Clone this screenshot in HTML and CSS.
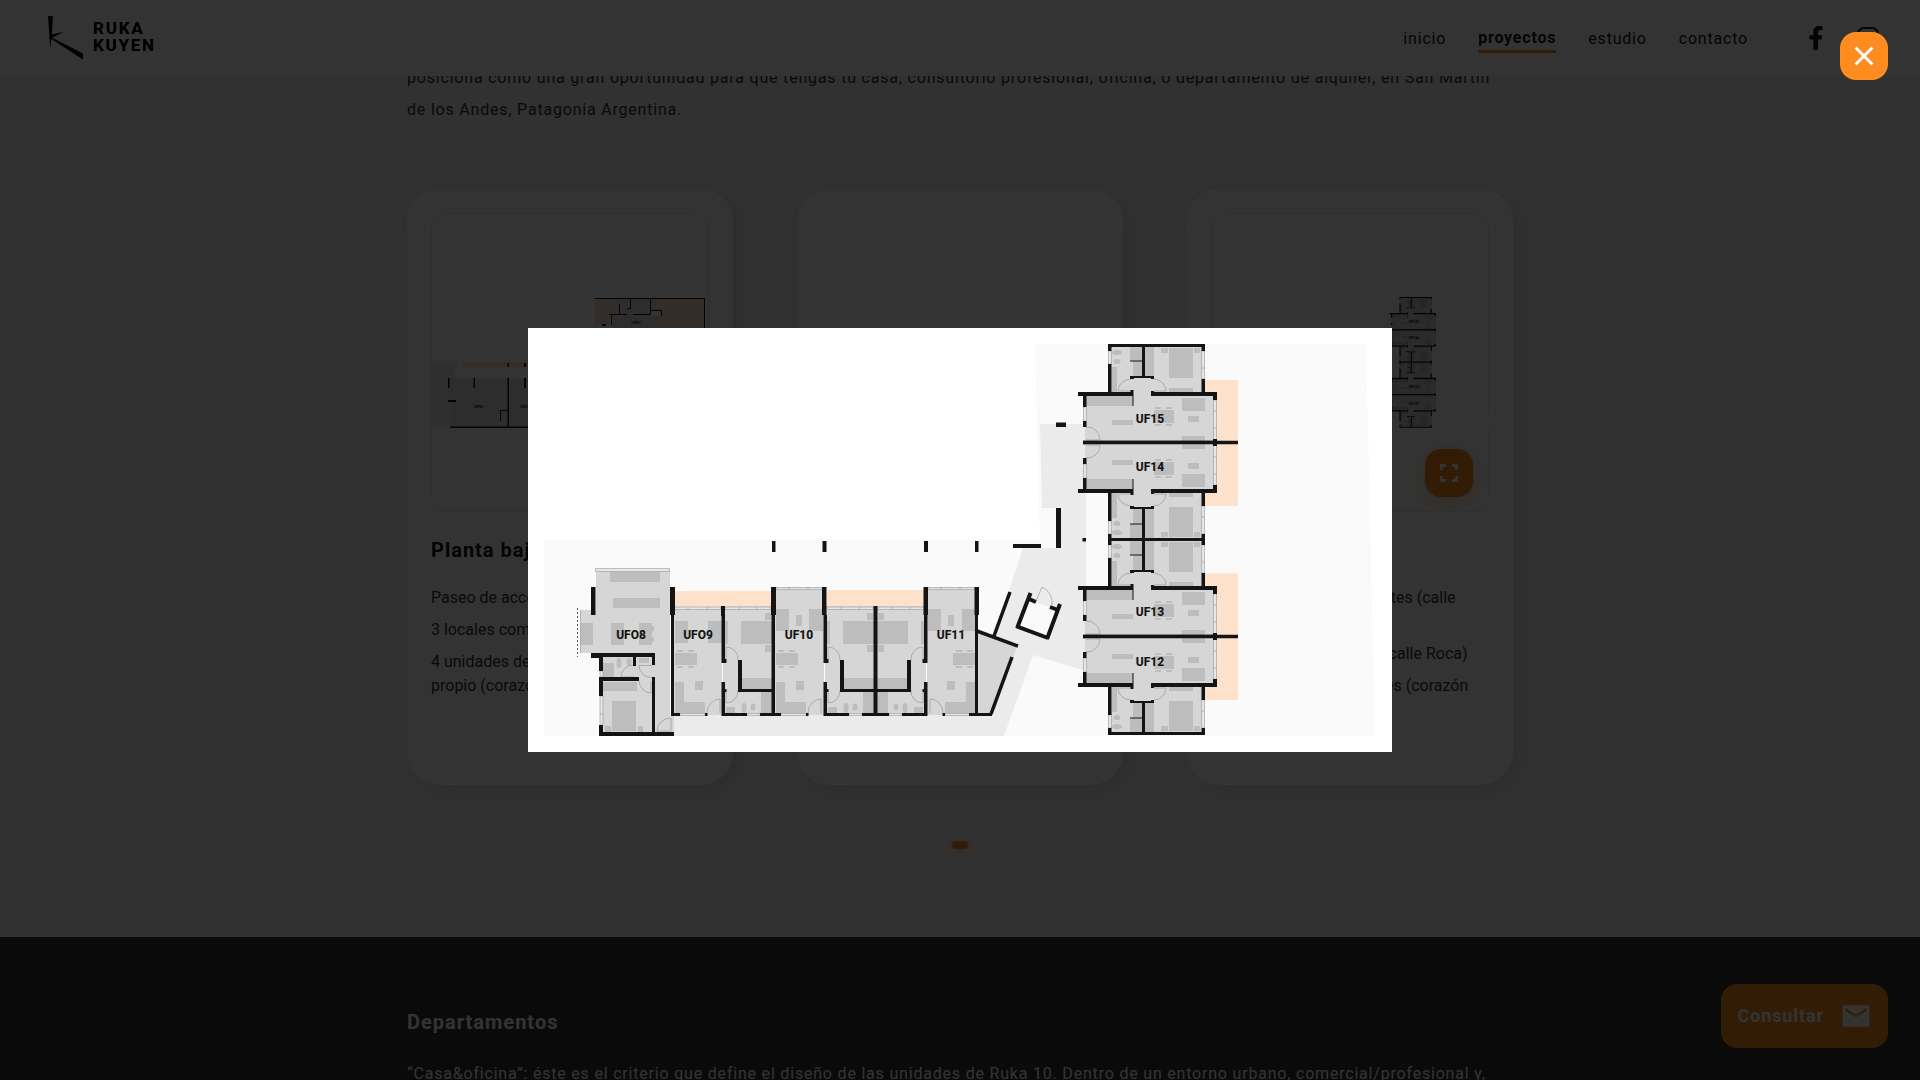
FILE: index.html
```html
<!DOCTYPE html>
<html lang="es">
<head>
<meta charset="utf-8">
<meta name="viewport" content="width=device-width, initial-scale=1">
<title>Ruka Kuyen - Proyectos</title>
<link rel="stylesheet" href="styles.css">
</head>
<body>
<header class="header">
  <a class="brand" href="#">
    <svg class="brand-mark" viewBox="0 0 36 44" aria-hidden="true"><path d="M0 0H5L3.800 18.500 15.500 16 4 21.800 35 37.500V43.500L3.500 23 2.200 32Z"/></svg>
    <span class="brand-name">RUKA<br>KUYEN</span>
  </a>
  <nav class="nav">
    <a href="#">inicio</a>
    <a class="is-active" href="#">proyectos</a>
    <a href="#">estudio</a>
    <a href="#">contacto</a>
  </nav>
  <div class="social">
    <a href="#" aria-label="Facebook"><svg viewBox="0 0 320 512"><path d="M279 288l14-93h-89v-60c0-25 13-50 53-50h40V7S260 0 225 0c-73 0-121 44-121 125v70H23v93h81v224h100V288z"/></svg></a>
    <a href="#" aria-label="Instagram"><svg viewBox="0 0 24 24" fill="none" stroke="currentColor" stroke-width="2"><rect x="2" y="2" width="20" height="20" rx="6"/><circle cx="12" cy="12" r="5"/></svg></a>
  </div>
</header>

<main>
  <section class="plans">
    <p class="lead">posiciona como una gran oportunidad para que tengas tu casa, consultorio profesional, oficina, o departamento de alquiler, en San Martín de los Andes, Patagonia Argentina.</p>
    <div class="cards">
      <article class="card">
        <div class="thumb">
          <svg viewBox="431 297 278 131" role="img" aria-label="Planta baja">
            <path fill="#ebebeb" d="M431 363h24v64h-24z"/>
            <path fill="#e2e2e2" d="M448 379h87v48h-84v-26h-3zM611 315h49v50h-49zM619 299h32v16h-32z"/>
            <path fill="#fde1cb" d="M463 362h65v5h-65zM595 299h24v15h-9v11h-15zM651 299h53v70h-44v-59h-9z"/>
            <path fill="#141414" d="M595 298h110v70h-1V299H595zM507.500 363h1.500v4h-1.500zM524 363h2v4h-2zM448 378h1.500v10H448zM473.500 378h1.500v10h-1.500zM507.500 378h1.500v50h-1.500zM524 378h2v10h-2zM448 400h8v2h-8zM450 426.500h85v1.500h-85zM500 410h8v1h-7v10h-1zM619 304h1v10h7v1h-18v-1h10zM630 299h1v10h-4v-1h3zM633 314h17v-15h1v11h11v6h-1v-5h-10v4h-18zM611 315h1v10h-1zM602 324h4v2h-4z"/>
            <g class="thumb-label"><text x="479" y="408">UF01</text><text x="525" y="408">UF02</text><text x="636" y="324">UF07</text></g>
          </svg>
        </div>
        <h3>Planta baja</h3>
        <ul><li>Paseo de acceso libre</li><li>3 locales comerciales</li><li>4 unidades de vivienda con patio propio (corazón de manzana)</li></ul>
      </article>
      <article class="card">
        <div class="thumb is-empty"></div>
        <h3>Primer piso</h3>
        <ul><li>Circulación semicubierta</li><li>4 unidades funcionales</li><li>Balcones propios</li></ul>
      </article>
      <article class="card">
        <div class="thumb">
          <svg viewBox="544 344 832 392" role="img" aria-label="Segundo piso"><path fill="#fcfcfc" d="M1035 344h331l9 392H1035z"/><use href="#wing"/></svg>
          <button class="expand" type="button" aria-label="Ampliar"><svg viewBox="0 0 18 18" fill="none" stroke="currentColor" stroke-width="3"><path d="M1.500 6V1.500H6M12 1.500h4.500V6M16.500 12v4.500H12M6 16.500H1.500V12"/></svg></button>
        </div>
        <h3>Segundo piso</h3>
        <ul><li>12 unidades con dos frentes (calle Roca y patio)</li><li>Acceso desde el núcleo (calle Roca)</li><li>4 unidades independientes (corazón de manzana)</li></ul>
      </article>
    </div>
    <div class="dots"><button type="button" aria-label="Página 1"></button></div>
  </section>

  <section class="details">
    <h3>Departamentos</h3>
    <p>“Casa&amp;oficina”: éste es el criterio que define el diseño de las unidades de Ruka 10. Dentro de un entorno urbano, comercial/profesional y,</p>
  </section>
</main>

<a class="contact" href="#">Consultar
  <svg viewBox="0 0 24 24" aria-hidden="true"><path d="M20 4H4c-1.100 0-2 .900-2 2v12c0 1.100.900 2 2 2h16c1.100 0 2-.900 2-2V6c0-1.100-.900-2-2-2zm0 4l-8 5-8-5V6l8 5 8-5z"/></svg>
</a>

<div class="overlay" role="dialog" aria-modal="true" aria-label="Plano ampliado">
  <button class="close" type="button" aria-label="Cerrar"><svg viewBox="0 0 20 20" stroke="currentColor" stroke-width="3"><path d="M1.500 1.500l17 17M18.500 1.500l-17 17"/></svg></button>
  <figure class="viewer">
    <svg viewBox="544 344 832 392" role="img" aria-label="Planta de unidades UF08 a UF15">
      <defs>
        <!-- One apartment of the east wing; the others are mirrored or shifted copies -->
        <g id="apartment">
          <path fill="#d6d6d6" d="M1109 345h95v49h12v49H1085v-49h24z"/>
          <path fill="#bdbdbd" d="M1086 396h47v10h-47zM1112 420h21v5h-21zM1182 398h23v13h-23zM1188 416h11v6h-11zM1182 436h23v6h-23zM1154 410h20v13h-20zM1155 407h6v2h-6zM1166 407h6v2h-6zM1155 424h6v2h-6zM1166 424h6v2h-6zM1169 348h24v30h-24zM1145 347h9v29h-9zM1161 348h7v5h-7zM1194 348h6v5h-6zM1169 388h24v5h-24zM1112 367h5v25h-5zM1130 347h12v14h-12zM1133 361h9v15h-9z"/>
          <ellipse cx="1117" cy="352.500" rx="5" ry="2.500" fill="#bdbdbd"/><ellipse cx="1117" cy="361.500" rx="3.500" ry="2.500" fill="#bdbdbd"/>
          <path class="glass" d="M1108.500 351h3v13h-3zM1201.500 351h3v28h-3zM1201.500 368h3M1083.500 407h3v14h-3zM1213.500 400h3v40h-3zM1213.500 411h3M1213.500 428h3"/>
          <path class="door" d="M1131 391h-13a13 12 0 0 1 13-12M1154 379a13 12 0 0 1 12 12h-12M1086 427a13 13 0 0 1 14 13h-14"/>
          <path fill="#141414" d="M1108 344h97v7h-3.500v-4h-56.500v29h9v3h-3v-1h-17v1h-4v-3h12v-29h-30.500v4h-3.500zM1130 360.500h12v1h-12zM1108 364h3.500v28h19v-2h3v16h-1v-10h-46v11h-3.500v-11h-5v-4h30zM1151 391h3v1h47.500v-13h3.500v13h12v8h-4v-4h-62zM1083 421h3.500v6H1083zM1083 440.700h134v3.600h-134zM1213 439h4v5h-4z"/>
        </g>
        <g id="wing">
          <use href="#apartment"/>
          <use href="#apartment" transform="matrix(1 0 0 -1 0 885)"/>
          <use href="#apartment" transform="translate(0 194)"/>
          <use href="#apartment" transform="matrix(1 0 0 -1 0 1079)"/>
          <g class="label"><text x="1150" y="423">UF15</text><text x="1150" y="471">UF14</text><text x="1150" y="616">UF13</text><text x="1150" y="666">UF12</text></g>
        </g>
        <g id="bedroom">
          <path fill="#d6d6d6" d="M723 606h50v109h-50z"/>
          <path fill="#bdbdbd" d="M741 621h31v23h-31zM765 613h6v7h-6zM765 645h6v7h-6zM725 621h3v23h-3zM742 678h31v11h-31zM761 692h12v21h-12zM726 707h9v6h-9z"/>
          <ellipse cx="744" cy="708" rx="2.500" ry="5" fill="#bdbdbd"/><ellipse cx="753" cy="707" rx="2.500" ry="3.500" fill="#bdbdbd"/>
          <path class="glass" d="M725 607h46v2.500h-46zM739 607v2.500M757 607v2.500M747 713.500h13v2h-13z"/>
          <path class="door" d="M726 660v-13a12 12 0 0 1 12 13M726 690v13a12 12 0 0 0 12-13"/>
          <path fill="#141414" d="M721.500 615h3.500v44h1.500v4h-5zM738 660h4v29h31v3h-35zM721.500 682h3.500v7h1.500v3h-1.500v21h22v3h-25.500zM760 713h15v3h-15z"/>
        </g>
        <g id="living">
          <path fill="#bdbdbd" d="M675 653h22v12h-22zM677 650h6v2h-6zM688 650h6v2h-6zM677 666h6v2h-6zM688 666h6v2h-6zM695 681h8v9h-8zM675 682h9v20h21v11h-30z"/>
          <path class="glass" d="M680 713.500h25v2h-25z"/>
          <path class="door" d="M720 713v-14a13 14 0 0 0-13 14"/>
          <path fill="#141414" d="M672.500 713h7.500v3h-7.500zM705 713h2.500v3h-2.500z"/>
        </g>
      </defs>

      <path fill="#fafafa" d="M544 540h496l-5-196h331l9 392H544z"/>
      <path fill="#ebebeb" d="M1040 424h46v247l-53-16-29 81H674v-21h318l25-70-23-9 29-88h33v-40h-14z"/>
      <path fill="#fde1cb" d="M674 591h98v16h-98zM827 590h97v17h-97zM1204 380h34v126h-34zM1204 573.500h34V700h-34z"/>
      <use href="#wing"/>

      <path fill="#d6d6d6" d="M596 570h74v146h4v18h-73v-80h-5v-1h-16v-43h16zM673 608h49v107h-49zM775 587h49v128h-49zM927 587h49v128h-49zM978 632l39 14-24 69h-15z"/>
      <path fill="#bdbdbd" d="M610 572h50v10h-50zM613 598h47v10h-47zM581 623h12v22h-12zM611 623h13v22h-13zM639 623h13v22h-13zM652 626h2v5h-2zM652 637h2v5h-2zM603 663h11v15h-11zM603 682h34v9h-34zM612 701h24v30h-24zM605 726h6v6h-6zM638 726h5v6h-5zM639 658h10v5h-10zM675 621h13v22h-13zM708 621h14v22h-14zM776 609h13v22h-13zM809 609h14v22h-14zM796 615h6v11h-6zM928 609h13v22h-13zM962 609h13v22h-13zM948 615h6v11h-6z"/>
      <ellipse cx="619" cy="663" rx="2.500" ry="5" fill="#bdbdbd"/><ellipse cx="629" cy="662" rx="2.500" ry="4" fill="#bdbdbd"/>
      <path class="glass" d="M595.500 568.500h74v3h-74zM580.500 610v43M600 696h3v29h-3zM600 714h3M600 671h3v6h-3zM675 607h46v2.500h-46zM688 607v2.500M707 607v2.500M776 587.500h47v2h-47zM789 587.500v2M808 587.500v2M928 587.500h47v2h-47zM941 587.500v2M960 587.500v2"/>
      <path fill="none" stroke="#555" stroke-dasharray="2 2" d="M577.500 608v49"/>
      <path class="door" d="M634 677h-13a13 12 0 0 1 13-12M652 665.500h-13a12 12 0 0 0 13 12M651 681v12a12 13 0 0 1-12-12M657 731h14v-13a14 13 0 0 0-14 13"/>
      <use href="#living"/><use href="#living" transform="translate(101 0)"/><use href="#living" transform="matrix(-1 0 0 1 1650 0)"/>
      <use href="#bedroom"/><use href="#bedroom" transform="translate(102 0)"/><use href="#bedroom" transform="matrix(-1 0 0 1 1649 0)"/>
      <path fill="#141414" d="M1217 440.700h21v3.600h-21zM1217 634.700h21v3.600h-21zM772 541h3.500v11H772zM822.500 541h4v11h-4zM924 541h4v11h-4zM975 541h3.500v11H975zM591 587h4.500v28H591zM670 587h5v28h-1v101h-3V615h-1zM591 653h64v12h-3v-8h-16v9h-3v-9h-30v14h-4v-13h-8zM599 677h40v4h-36v15h-4zM652 677h3v55h19v4h-75v-11h4v7h49zM721 606h4v10h-4zM771 587h5v28h-1v101h-3.500V615h-.5zM822 587h4.500v28H822zM873.500 606h4v110h-4zM923.500 587h4.500v28h-4.500zM974.500 587h4.500v28h-1v98h14v3h-23v-3h6v-98h-.5zM1013 544h28v4h-28zM1056 508h5v40h-5zM1056 422.500h10v4.500h-10zM1082.500 538h3.500v3.500h-3.500z"/>
      <path fill="#fafafa" d="M1030 600l27 10-11 26-27-10z"/>
      <g fill="none" stroke="#141414" stroke-width="3.500"><path d="M977 631l41 15M1012 657l-21 57M1010 592l-16 44"/><path stroke-width="4" d="M1030.500 593l-13 34M1016 626l32 12M1047 639l13-35M1029 599l7 3M1050 607l8 3"/></g>
      <path class="door" d="M1036 601l6-14a17 17 0 0 1 10 18"/>
      <g class="label"><text x="631" y="639">UFO8</text><text x="698" y="639">UFO9</text><text x="799" y="639">UF10</text><text x="951" y="639">UF11</text></g>
    </svg>
  </figure>
</div>
</body>
</html>
```
FILE: styles.css
```css
:root {
  --orange: #ff8c1e;
  --ink: #141414;
}

* { box-sizing: border-box; }

html, body { height: 100%; }

body {
  margin: 0;
  overflow: hidden;
  background: #f5f5f5;
  color: #333;
  font: 16px/24px Roboto, sans-serif;
}

a { color: inherit; text-decoration: none; }
button { border: 0; padding: 0; cursor: pointer; }
svg { display: block; }
h3, p, ul, figure { margin: 0; padding: 0; }

.header {
  position: fixed;
  inset: 0 0 auto;
  z-index: 1;
  display: flex;
  align-items: center;
  height: 76px;
  padding: 0 40px 0 48px;
  background: #fff;
  color: var(--ink);
}

.brand {
  display: flex;
  align-items: center;
  gap: 9px;
  margin-right: auto;
  color: #000;
}
.brand-mark { width: 36px; height: 44px; }
.brand-name {
  padding-bottom: 3px;
  font-size: 17px;
  font-weight: 800;
  line-height: 17px;
  letter-spacing: 0.1em;
}

.nav {
  display: flex;
  align-items: center;
  gap: 32px;
  padding-top: 2px;
  letter-spacing: 0.05em;
}
.nav .is-active { border-bottom: 3px solid var(--orange); font-weight: 700; }

.social { display: flex; gap: 28px; margin-left: 56px; }
.social svg { width: 24px; height: 24px; fill: currentColor; }
.social a:last-child svg { fill: none; }

.plans, .details { padding-inline: max(24px, calc((100% - 1106px) / 2)); }

.plans { padding-top: 62px; padding-bottom: 88px; }
.lead, .details p { line-height: 32px; letter-spacing: 0.05em; }

.cards {
  display: grid;
  grid-template-columns: repeat(3, minmax(0, 1fr));
  gap: 64px;
  margin-top: 63px;
}
.card {
  min-height: 596px;
  padding: 24px;
  border-radius: 32px;
  background: #fff;
  box-shadow: 6px 6px 24px rgba(0, 0, 0, .12);
}
.thumb {
  position: relative;
  display: grid;
  align-items: center;
  height: 299px;
  border-radius: 16px;
  box-shadow: inset 0 0 0 1px #ebebeb;
}
.thumb.is-empty { box-shadow: none; }
.thumb > svg { width: 100%; }
.expand {
  position: absolute;
  right: 16px;
  bottom: 15px;
  display: grid;
  place-items: center;
  width: 48px;
  height: 48px;
  border-radius: 16px;
  background: var(--orange);
  color: #fff;
  box-shadow: 0 4px 16px rgba(255, 140, 30, .4);
}
.expand svg { width: 18px; height: 18px; }
.close svg { width: 20px; height: 20px; }

h3 { font-size: 20px; line-height: 28px; letter-spacing: 0.05em; }
.card h3 { margin: 24px 0 22px; color: var(--ink); }
.card ul { display: grid; gap: 8px; list-style: none; }

.dots { display: flex; justify-content: center; margin-top: 56px; }
.dots button {
  width: 16px;
  height: 8px;
  border-radius: 4px;
  background: var(--orange);
  box-shadow: 0 2px 8px rgba(255, 140, 30, .5);
}

.details { padding-block: 71px; background: #333; color: #fff; }
.details p { margin-top: 22px; }

.contact {
  position: fixed;
  right: 32px;
  bottom: 32px;
  display: flex;
  align-items: center;
  gap: 16px;
  height: 64px;
  padding: 0 16px;
  border-radius: 16px;
  background: var(--orange);
  color: #fff;
  font-size: 18px;
  font-weight: 700;
  letter-spacing: 0.05em;
}
.contact svg { width: 32px; height: 32px; fill: currentColor; }

.overlay {
  position: fixed;
  inset: 0;
  z-index: 2;
  display: grid;
  place-items: center;
  background: rgba(0, 0, 0, .8);
}
.viewer { width: 45%; padding: 16px; background: #fff; }
.close {
  position: absolute;
  top: 32px;
  right: 32px;
  display: grid;
  place-items: center;
  width: 48px;
  height: 48px;
  border-radius: 16px;
  background: var(--orange);
  color: #fff;
}

.glass { fill: #e6e6e6; stroke: #999; stroke-width: .6; }
.door { fill: none; stroke: #999; stroke-width: .7; }
.label { fill: var(--ink); font-size: 12px; font-weight: 800; text-anchor: middle; }
.thumb-label { fill: var(--ink); font-size: 4px; font-weight: 700; text-anchor: middle; }
```
